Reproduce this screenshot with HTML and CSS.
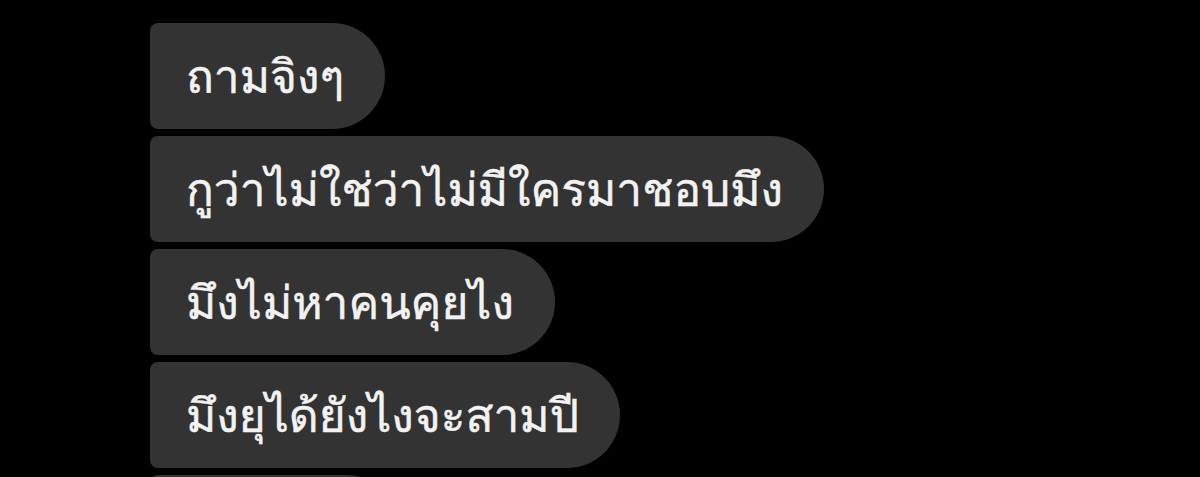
FILE: index.html
```html
<!DOCTYPE html>
<html lang="th">
<head>
<meta charset="utf-8">
<link rel="stylesheet" href="styles.css">
</head>
<body>
<div class="thread">
  <div class="bubble">ถามจิงๆ</div>
  <div class="bubble">กูว่าไม่ใช่ว่าไม่มีใครมาชอบมึง</div>
  <div class="bubble">มึงไม่หาคนคุยไง</div>
  <div class="bubble">มึงยุได้ยังไงจะสามปี</div>
  <div class="bubble bubble-tail" aria-hidden="true"></div>
</div>
</body>
</html>
```
FILE: styles.css
```css
html, body {
  margin: 0;
  padding: 0;
  background: #000;
  height: 477px;
  overflow: hidden;
}
.thread {
  display: flex;
  flex-direction: column;
  align-items: flex-start;
  gap: 7px;
  padding: 23px 0 0 150px;
}
.bubble {
  box-sizing: border-box;
  height: 106px;
  display: flex;
  align-items: center;
  padding: 0 41px 0 36px;
  background: #333333;
  color: #f2f2f2;
  border-radius: 8px 53px 53px 8px;
  font-family: "Loma", "Noto Sans Thai Looped", sans-serif;
  font-size: 46px;
  -webkit-text-stroke: 0.5px #f2f2f2;
  white-space: nowrap;
}
.bubble-tail {
  width: 250px;
}
```
